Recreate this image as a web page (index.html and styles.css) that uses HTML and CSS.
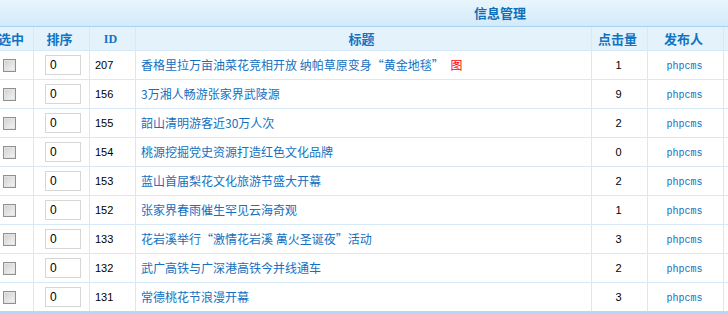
FILE: index.html
```html
<!DOCTYPE html>
<html lang="zh-CN">
<head>
<meta charset="utf-8">
<title>信息管理</title>
<link rel="stylesheet" href="styles.css">
</head>
<body>
<div class="wrap">
<table class="grid">
  <colgroup>
    <col class="c-sel"><col class="c-ord"><col class="c-id"><col class="c-title"><col class="c-hits"><col class="c-user"><col class="c-rest">
  </colgroup>
  <thead>
    <tr class="caption-row"><th colspan="7">信息管理</th></tr>
    <tr class="head-row">
      <th>选中</th><th>排序</th><th class="id-head">ID</th><th>标题</th><th>点击量</th><th>发布人</th><th></th>
    </tr>
  </thead>
  <tbody>
    <tr><td class="sel"><input type="checkbox" class="cb"></td><td class="ord"><input class="num" type="text" value="0"></td><td class="id">207</td><td class="title"><a href="#">香格里拉万亩油菜花竞相开放 纳帕草原变身“黄金地毯”</a> <span class="pic">图</span></td><td class="hits">1</td><td class="user"><a href="#">phpcms</a></td><td></td></tr>
    <tr><td class="sel"><input type="checkbox" class="cb"></td><td class="ord"><input class="num" type="text" value="0"></td><td class="id">156</td><td class="title"><a href="#">3万湘人畅游张家界武陵源</a></td><td class="hits">9</td><td class="user"><a href="#">phpcms</a></td><td></td></tr>
    <tr><td class="sel"><input type="checkbox" class="cb"></td><td class="ord"><input class="num" type="text" value="0"></td><td class="id">155</td><td class="title"><a href="#">韶山清明游客近30万人次</a></td><td class="hits">2</td><td class="user"><a href="#">phpcms</a></td><td></td></tr>
    <tr><td class="sel"><input type="checkbox" class="cb"></td><td class="ord"><input class="num" type="text" value="0"></td><td class="id">154</td><td class="title"><a href="#">桃源挖掘党史资源打造红色文化品牌</a></td><td class="hits">0</td><td class="user"><a href="#">phpcms</a></td><td></td></tr>
    <tr><td class="sel"><input type="checkbox" class="cb"></td><td class="ord"><input class="num" type="text" value="0"></td><td class="id">153</td><td class="title"><a href="#">蓝山首届梨花文化旅游节盛大开幕</a></td><td class="hits">2</td><td class="user"><a href="#">phpcms</a></td><td></td></tr>
    <tr><td class="sel"><input type="checkbox" class="cb"></td><td class="ord"><input class="num" type="text" value="0"></td><td class="id">152</td><td class="title"><a href="#">张家界春雨催生罕见云海奇观</a></td><td class="hits">1</td><td class="user"><a href="#">phpcms</a></td><td></td></tr>
    <tr><td class="sel"><input type="checkbox" class="cb"></td><td class="ord"><input class="num" type="text" value="0"></td><td class="id">133</td><td class="title"><a href="#">花岩溪举行“激情花岩溪 萬火圣诞夜”活动</a></td><td class="hits">3</td><td class="user"><a href="#">phpcms</a></td><td></td></tr>
    <tr><td class="sel"><input type="checkbox" class="cb"></td><td class="ord"><input class="num" type="text" value="0"></td><td class="id">132</td><td class="title"><a href="#">武广高铁与广深港高铁今并线通车</a></td><td class="hits">2</td><td class="user"><a href="#">phpcms</a></td><td></td></tr>
    <tr><td class="sel"><input type="checkbox" class="cb"></td><td class="ord"><input class="num" type="text" value="0"></td><td class="id">131</td><td class="title"><a href="#">常德桃花节浪漫开幕</a></td><td class="hits">3</td><td class="user"><a href="#">phpcms</a></td><td></td></tr>
  </tbody>
</table>
</div>
</body>
</html>
```

FILE: styles.css
```css
html, body {
  margin: 0;
  padding: 0;
  background: #fff;
  overflow: hidden;
}

body {
  font-family: "Noto Sans CJK SC", "Liberation Sans", sans-serif;
  font-size: 12px;
  color: #000;
}

.wrap {
  margin-left: -8px;
  width: 1016px;
}

.grid {
  width: 1016px;
  border-collapse: collapse;
  table-layout: fixed;
}

.c-sel { width: 41px; }
.c-ord { width: 56px; }
.c-id { width: 46px; }
.c-title { width: 456px; }
.c-hits { width: 56px; }
.c-user { width: 76px; }

.grid th, .grid td {
  border: 1px solid #d7e9f7;
  padding: 0;
}

.caption-row th {
  height: 26px;
  background: linear-gradient(#e9f5fd, #d2eaf9);
  border: none;
  border-bottom: 1px solid #a9d3f1;
  color: #0f6fbb;
  font-size: 13px;
  font-weight: bold;
  text-align: center;
  line-height: 26px;
}

.head-row th {
  height: 23px;
  background: #e4f2fc;
  color: #1174c3;
  font-size: 13px;
  font-weight: bold;
  text-align: center;
  line-height: 22px;
  padding-right: 4px;
  border-top: none;
}

.head-row .id-head {
  font-family: "Liberation Serif", serif;
  font-size: 12px;
}

.grid tbody td {
  height: 28px;
  background: #fff;
  line-height: 18px;
}

.grid tbody tr:last-child td {
  border-bottom: 3px solid #b3d9f4;
}

.sel {
  padding-left: 10px !important;
}

.cb {
  appearance: none;
  -webkit-appearance: none;
  display: block;
  width: 13px;
  height: 13px;
  margin: 0;
  border: 1px solid #8f9090;
  background: linear-gradient(135deg, #cfcfcf, #f6f6f6);
  box-shadow: inset 0 0 0 1px #e3e3e3;
  box-sizing: border-box;
}

.ord {
  padding-left: 11px !important;
}

.num {
  display: block;
  width: 36px;
  height: 20px;
  box-sizing: border-box;
  border: 1px solid #d6d6d6;
  padding: 0 0 0 4px;
  margin: 0;
  font-family: "Liberation Sans", sans-serif;
  font-size: 12px;
  color: #000;
  background: #fff;
}

.id {
  padding-left: 5px !important;
  font-family: "Liberation Sans", sans-serif;
  font-size: 11px;
}

.title {
  padding-left: 5px !important;
  white-space: nowrap;
  overflow: hidden;
}

.title a {
  color: #1470c0;
  text-decoration: none;
}

.pic {
  color: #f00;
  margin-left: 4px;
}

.hits {
  text-align: center;
  padding-right: 2px !important;
  font-family: "Liberation Sans", sans-serif;
  font-size: 11px;
}

.user {
  text-align: center;
  padding-right: 2px !important;
}

.user a {
  font-family: "Liberation Mono", monospace;
  font-size: 10px;
  color: #1470c0;
  text-decoration: none;
}
```
